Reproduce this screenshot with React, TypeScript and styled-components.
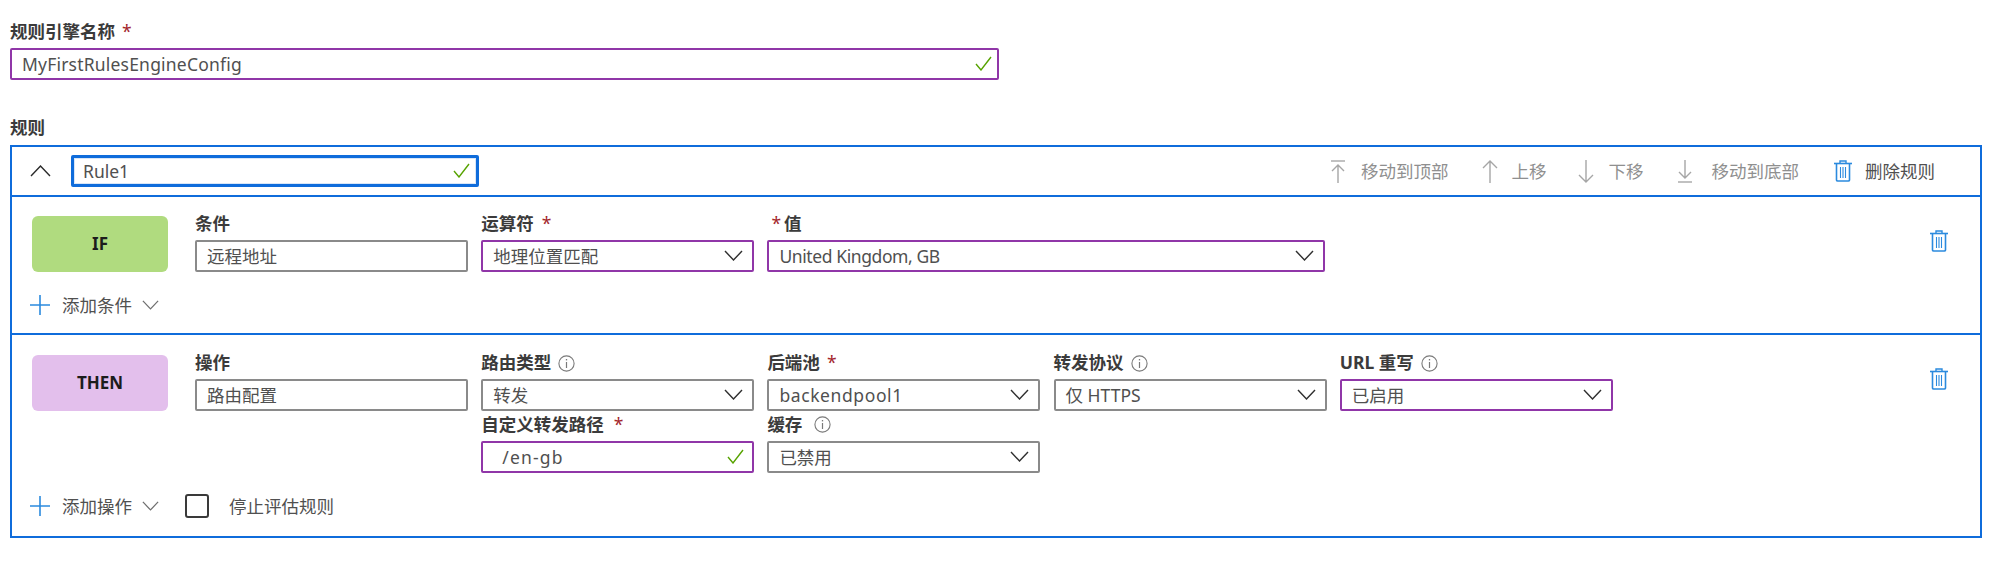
import React from 'react';
import styled, { createGlobalStyle } from 'styled-components';

const GlobalStyle = createGlobalStyle`
  html, body {
    margin: 0;
    padding: 0;
    background: #fff;
  }
  * {
    box-sizing: border-box;
  }
`;

const Colors = {
  text: '#505050',
  label: '#3b3b3b',
  muted: '#8f8f8f',
  blue: '#0f6cdb',
  iconBlue: '#2b8ade',
  purple: '#9036a8',
  gray: '#8a8a8a',
  green: '#57a300',
  red: '#a4262c',
};

const Page = styled.div`
  width: 2000px;
  height: 571px;
  padding: 24px 18px 0 10px;
  font-family: 'Noto Sans', 'Noto Sans CJK SC', sans-serif;
  font-size: 17.5px;
  color: ${Colors.text};
  overflow: hidden;
`;

const Label = styled.div<{ $tall?: boolean; $gap?: number }>`
  height: ${({ $tall }) => ($tall ? '30px' : '24px')};
  line-height: ${({ $tall }) => ($tall ? '26px' : '14px')};
  font-weight: 700;
  color: ${Colors.label};
  white-space: nowrap;
  display: flex;
  align-items: flex-start;
  gap: ${({ $gap }) => $gap ?? 7}px;

  svg {
    margin-top: ${({ $tall }) => ($tall ? '5px' : '0')};
  }
`;

const Star = styled.span`
  color: ${Colors.red};
  font-weight: 400;
`;

const LeadStar = styled(Star)`
  margin-left: 4px;
`;

const SectionTitle = styled.div`
  height: 18px;
  line-height: 16px;
  font-weight: 700;
  color: ${Colors.label};
`;

const Control = styled.div<{
  $variant?: 'plain' | 'edited' | 'focus';
  $width?: number;
  $left?: number;
  $right?: number;
}>`
  height: 32px;
  width: ${({ $width }) => ($width ? `${$width}px` : '100%')};
  display: flex;
  align-items: center;
  justify-content: space-between;
  padding: 0 ${({ $right }) => $right ?? 9}px 1px ${({ $left }) => $left ?? 10}px;
  border: 2px solid
    ${({ $variant }) =>
      $variant === 'edited' ? Colors.purple : $variant === 'focus' ? Colors.blue : Colors.gray};
  border-radius: 2px;
  background: #fff;
  white-space: nowrap;
  ${({ $variant }) => $variant === 'focus' && 'border-width: 3px; box-shadow: inset 0 0 0 1px #d8e6f8;'}
`;

const Value = styled.span<{ $spacing: number }>`
  letter-spacing: ${({ $spacing }) => $spacing}px;
`;

const NameRow = styled.div`
  margin-bottom: 39px;
`;

const RuleBox = styled.div`
  margin-top: 8px;
  border: 2px solid ${Colors.blue};
  height: 393px;
`;

const RuleHeader = styled.div`
  height: 50px;
  display: flex;
  align-items: center;
  padding: 0 45px 0 18px;
  border-bottom: 2px solid ${Colors.blue};
`;

const Collapse = styled.div`
  width: 41px;
  display: flex;
`;

const Toolbar = styled.div`
  margin-left: auto;
  display: flex;
  align-items: center;
`;

const ToolButton = styled.div<{ $gap: number; $pad: number; $active?: boolean }>`
  display: flex;
  align-items: center;
  margin-left: ${({ $gap }) => $gap}px;
  color: ${({ $active }) => ($active ? Colors.text : Colors.muted)};
  white-space: nowrap;
  line-height: 22px;

  svg {
    margin-right: ${({ $pad }) => $pad}px;
    flex: none;
  }
`;

const Section = styled.div<{ $height: number; $pad: number; $bordered?: boolean }>`
  height: ${({ $height }) => $height}px;
  padding: ${({ $pad }) => $pad}px 44px 0 20px;
  position: relative;
  ${({ $bordered }) => $bordered && `border-bottom: 2px solid ${Colors.blue};`}
`;

const Body = styled.div`
  display: flex;
  align-items: flex-start;
`;

const Badge = styled.div<{ $color: string }>`
  flex: none;
  width: 136px;
  height: 56px;
  margin-right: 27px;
  border-radius: 6px;
  background: ${({ $color }) => $color};
  color: #1c1c1c;
  font-size: 17px;
  font-weight: 700;
  display: flex;
  align-items: center;
  justify-content: center;
  padding-bottom: 1px;
`;

const Fields = styled.div`
  display: grid;
  grid-template-columns: repeat(5, 273px);
  column-gap: 13.2px;
`;

const Field = styled.div<{ $start?: number; $span?: number }>`
  ${({ $start }) => $start && `grid-column-start: ${$start};`}
  ${({ $span }) => $span && `grid-column-end: span ${$span};`}
`;

const Trash = styled.div`
  position: absolute;
  right: 32px;
  top: 33px;
  display: flex;
`;

const AddRow = styled.div<{ $top: number }>`
  display: flex;
  align-items: center;
  height: 24px;
  margin-top: ${({ $top }) => $top}px;
  margin-left: -2px;
`;

const AddLabel = styled.span`
  margin-left: 12px;
  margin-right: 10px;
  padding-bottom: 2px;
  white-space: nowrap;
`;

const Checkbox = styled.div`
  width: 24px;
  height: 24px;
  margin-left: 26px;
  margin-right: 20px;
  border: 2px solid #3a3a3a;
  border-radius: 3px;
`;

const CheckText = styled.span`
  padding-bottom: 2px;
`;

const Chevron = ({ size = 19, color = '#2f2f2f' }: { size?: number; color?: string }) => (
  <svg width={size} height={size * 0.58} viewBox="0 0 19 11" fill="none">
    <polyline points="1,1 9.5,10 18,1" stroke={color} strokeWidth="1.4" />
  </svg>
);

const ChevronUp = () => (
  <svg width="21" height="12" viewBox="0 0 21 12" fill="none">
    <polyline points="1,11 10.5,1 20,11" stroke="#2a2a2a" strokeWidth="1.4" />
  </svg>
);

const Check = () => (
  <svg width="17" height="15" viewBox="0 0 17 15" fill="none">
    <polyline points="1,8 6,14 16,1" stroke={Colors.green} strokeWidth="1.4" />
  </svg>
);

const Info = () => (
  <svg width="17" height="17" viewBox="0 0 17 17" fill="none">
    <circle cx="8.5" cy="8.5" r="7.6" stroke="#7a7a7a" strokeWidth="1.1" />
    <line x1="8.5" y1="7" x2="8.5" y2="13" stroke="#7a7a7a" strokeWidth="1.2" />
    <line x1="8.5" y1="4" x2="8.5" y2="5.4" stroke="#7a7a7a" strokeWidth="1.3" />
  </svg>
);

const TrashIcon = () => (
  <svg width="18" height="22" viewBox="0 0 18 22" fill="none" stroke={Colors.iconBlue}>
    <path d="M0 3.5H18" strokeWidth="1.6" />
    <path d="M6 3.5V1H12V3.5" strokeWidth="1.4" />
    <path d="M2.5 3.5V20A1.2 1.2 0 0 0 3.7 21H14.3A1.2 1.2 0 0 0 15.5 20V3.5" strokeWidth="1.6" />
    <path d="M6.5 7V18M9 7V18M11.5 7V18" strokeWidth="1.1" />
  </svg>
);

const Plus = () => (
  <svg width="20" height="20" viewBox="0 0 20 20" fill="none" stroke={Colors.iconBlue} strokeWidth="1.6">
    <path d="M0 10H20M10 0V20" />
  </svg>
);

const Arrow = ({ direction, bar }: { direction: 'up' | 'down'; bar?: boolean }) => (
  <svg width="16" height="23" viewBox="0 0 16 23" fill="none" stroke="#a6a6a6" strokeWidth="1.4">
    {direction === 'up' ? (
      <>
        {bar && <path d="M1 1H15" />}
        <path d={bar ? 'M8 5V23M2 11L8 5L14 11' : 'M8 1V23M1 8L8 1L15 8'} />
      </>
    ) : (
      <>
        {bar && <path d="M1 22H15" />}
        <path d={bar ? 'M8 0V18M2 12L8 18L14 12' : 'M8 0V22M1 15L8 22L15 15'} />
      </>
    )}
  </svg>
);

const App: React.FC = () => (
  <>
    <GlobalStyle />
    <Page>
      <NameRow>
        <Label>
          规则引擎名称 <Star>*</Star>
        </Label>
        <Control $variant="edited" $width={989} $right={5}>
          <Value $spacing={0.2}>MyFirstRulesEngineConfig</Value>
          <Check />
        </Control>
      </NameRow>
      <SectionTitle>规则</SectionTitle>
      <RuleBox>
        <RuleHeader>
          <Collapse>
            <ChevronUp />
          </Collapse>
          <Control $variant="focus" $width={408} $left={9} $right={6}>
            Rule1
            <Check />
          </Control>
          <Toolbar>
            <ToolButton $gap={0} $pad={15}>
              <Arrow direction="up" bar />
              移动到顶部
            </ToolButton>
            <ToolButton $gap={33} $pad={14}>
              <Arrow direction="up" />
              上移
            </ToolButton>
            <ToolButton $gap={31} $pad={15}>
              <Arrow direction="down" />
              下移
            </ToolButton>
            <ToolButton $gap={33} $pad={19}>
              <Arrow direction="down" bar />
              移动到底部
            </ToolButton>
            <ToolButton $gap={35} $pad={13} $active>
              <TrashIcon />
              删除规则
            </ToolButton>
          </Toolbar>
        </RuleHeader>

        <Section $height={138} $pad={19} $bordered>
          <Body>
            <Badge $color="#b0db7f">IF</Badge>
            <Fields>
              <Field>
                <Label>条件</Label>
                <Control>远程地址</Control>
              </Field>
              <Field>
                <Label $gap={8}>
                  运算符 <Star>*</Star>
                </Label>
                <Control $variant="edited">
                  地理位置匹配
                  <Chevron />
                </Control>
              </Field>
              <Field $span={2}>
                <Label $gap={3}>
                  <LeadStar>*</LeadStar> 值
                </Label>
                <Control $variant="edited" $width={558}>
                  <Value $spacing={-0.4}>United Kingdom, GB</Value>
                  <Chevron />
                </Control>
              </Field>
            </Fields>
          </Body>
          <Trash>
            <TrashIcon />
          </Trash>
          <AddRow $top={21}>
            <Plus />
            <AddLabel>添加条件</AddLabel>
            <Chevron size={17} color="#6f6f6f" />
          </AddRow>
        </Section>

        <Section $height={201} $pad={20}>
          <Body>
            <Badge $color="#e3bfec">THEN</Badge>
            <Fields>
              <Field>
                <Label>操作</Label>
                <Control>路由配置</Control>
              </Field>
              <Field>
                <Label>
                  路由类型 <Info />
                </Label>
                <Control>
                  转发
                  <Chevron />
                </Control>
              </Field>
              <Field>
                <Label>
                  后端池 <Star>*</Star>
                </Label>
                <Control>
                  <Value $spacing={0.6}>backendpool1</Value>
                  <Chevron />
                </Control>
              </Field>
              <Field>
                <Label>
                  转发协议 <Info />
                </Label>
                <Control>
                  仅 HTTPS
                  <Chevron />
                </Control>
              </Field>
              <Field>
                <Label>
                  URL 重写 <Info />
                </Label>
                <Control $variant="edited">
                  已启用
                  <Chevron />
                </Control>
              </Field>
              <Field $start={2}>
                <Label $tall $gap={10}>
                  自定义转发路径 <Star>*</Star>
                </Label>
                <Control $variant="edited" $left={19} $right={8}>
                  <Value $spacing={1.2}>/en-gb</Value>
                  <Check />
                </Control>
              </Field>
              <Field>
                <Label $tall $gap={12}>
                  缓存 <Info />
                </Label>
                <Control>
                  已禁用
                  <Chevron />
                </Control>
              </Field>
            </Fields>
          </Body>
          <Trash>
            <TrashIcon />
          </Trash>
          <AddRow $top={21}>
            <Plus />
            <AddLabel>添加操作</AddLabel>
            <Chevron size={17} color="#6f6f6f" />
            <Checkbox />
            <CheckText>停止评估规则</CheckText>
          </AddRow>
        </Section>
      </RuleBox>
    </Page>
  </>
);

export default App;
